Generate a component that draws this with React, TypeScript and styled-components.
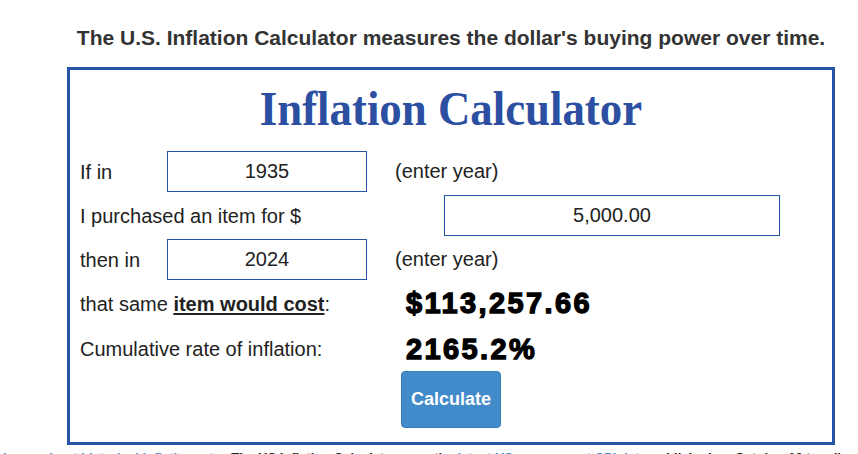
import React from "react";
import styled, { createGlobalStyle } from "styled-components";

const Global = createGlobalStyle`
  html, body { margin: 0; padding: 0; background: #fff; }
  body { font-family: "Liberation Sans", Arial, sans-serif; color: #222; }
`;

const Page = styled.div`
  width: 768px;
  padding-left: 67px;
`;

const Heading = styled.h2`
  margin: 26px 0 17px;
  font-size: 21px;
  line-height: 24px;
  font-weight: bold;
  color: #333;
  text-align: center;
  white-space: nowrap;
`;

const Box = styled.div`
  border: 3px solid #2553a5;
  height: 372px;
  box-sizing: content-box;
`;

const TitleWrap = styled.div`
  display: flex;
  justify-content: center;
  margin-top: 14px;
  height: 52px;
`;

const Title = styled.h1`
  margin: 0;
  font-family: "Liberation Serif", "Times New Roman", serif;
  font-size: 49px;
  line-height: 50px;
  font-weight: bold;
  color: #2d4fa2;
  display: inline-block;
  transform: scaleX(0.915);
  white-space: nowrap;
`;

const Form = styled.div`
  display: flex;
  flex-direction: column;
  padding: 15px 0 0 10px;
`;

const Row = styled.div<{ $h?: number; $mb?: number }>`
  display: flex;
  align-items: center;
  height: ${(p) => p.$h ?? 41}px;
  margin-bottom: ${(p) => p.$mb ?? 3}px;
`;

const Label = styled.span<{ $w: number }>`
  width: ${(p) => p.$w}px;
  flex: none;
  font-size: 20px;
  line-height: 24px;
  color: #222;
  white-space: nowrap;
`;

const Input = styled.div<{ $w: number }>`
  width: ${(p) => p.$w}px;
  height: 41px;
  box-sizing: border-box;
  border: 1px solid #2553a5;
  display: flex;
  align-items: center;
  justify-content: center;
  font-size: 20px;
  color: #222;
  flex: none;
`;

const Hint = styled.span`
  margin-left: 28px;
  font-size: 20px;
  color: #222;
`;

const Strong = styled.span`
  font-weight: bold;
  text-decoration: underline;
  text-underline-offset: 2px;
`;

const Value = styled.span`
  font-size: 29px;
  font-weight: bold;
  color: #000;
  letter-spacing: 2.4px;
  -webkit-text-stroke: 1.3px #000;
  margin-left: 1px;
`;

const Button = styled.button`
  margin-left: 321px;
  width: 100px;
  height: 57px;
  border: 1px solid #3a7fbd;
  border-radius: 4px;
  background: #428bca;
  color: #fff;
  font-family: "Liberation Sans", Arial, sans-serif;
  font-weight: bold;
  font-size: 18px;
  padding: 0;
`;

const Footer = styled.p`
  margin: 5px 0 0;
  padding-left: 3px;
  font-size: 13px;
  line-height: 16px;
  color: #222;
  white-space: nowrap;
  font-weight: bold;
`;

const Link = styled.a`
  color: #428bca;
  text-decoration: none;
`;

export default function App() {
  return (
    <>
      <Global />
      <Page>
        <Heading>The U.S. Inflation Calculator measures the dollar's buying power over time.</Heading>
        <Box>
          <TitleWrap>
            <Title>Inflation Calculator</Title>
          </TitleWrap>
          <Form>
            <Row>
              <Label $w={87}>If in</Label>
              <Input $w={200}>1935</Input>
              <Hint>(enter year)</Hint>
            </Row>
            <Row>
              <Label $w={364}>I purchased an item for $</Label>
              <Input $w={336}>5,000.00</Input>
            </Row>
            <Row>
              <Label $w={87}>then in</Label>
              <Input $w={200}>2024</Input>
              <Hint>(enter year)</Hint>
            </Row>
            <Row $h={41} $mb={4}>
              <Label $w={325}>
                that same <Strong>item would cost</Strong>:
              </Label>
              <Value>$113,257.66</Value>
            </Row>
            <Row $h={42} $mb={1}>
              <Label $w={325}>Cumulative rate of inflation:</Label>
              <Value>2165.2%</Value>
            </Row>
            <div>
              <Button>Calculate</Button>
            </div>
          </Form>
        </Box>
      </Page>
      <Footer>
        <Link href="#">Learn about historical inflation rates</Link>{" "}
        The US Inflation Calculator uses the <Link href="#">latest US government</Link>{" "}
        <Link href="#">CPI data</Link> published on October 10 to adjust for inflation.
      </Footer>
    </>
  );
}
